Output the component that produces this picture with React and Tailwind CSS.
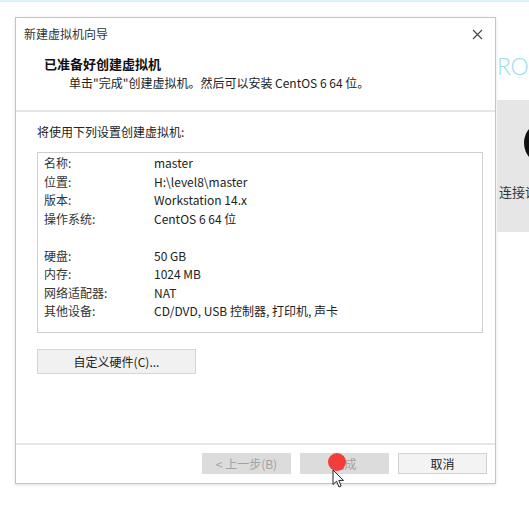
import React from 'react';

const rows = [
  ['名称:', 'master'],
  ['位置:', 'H:\\level8\\master'],
  ['版本:', 'Workstation 14.x'],
  ['操作系统:', 'CentOS 6 64 位'],
  null,
  ['硬盘:', '50 GB'],
  ['内存:', '1024 MB'],
  ['网络适配器:', 'NAT'],
  ['其他设备:', 'CD/DVD, USB 控制器, 打印机, 声卡'],
];

function CloseIcon() {
  return (
    <svg width="11" height="11" viewBox="0 0 11 11">
      <path d="M1 1 L10 10 M10 1 L1 10" stroke="#444" strokeWidth="1.1" fill="none" />
    </svg>
  );
}

function Cursor() {
  return (
    <svg width="13" height="20" viewBox="0 0 13 20">
      <path
        d="M1 1 L1 15.5 L4.5 12.2 L7 18 L9.2 17 L6.8 11.4 L11.5 11.4 Z"
        fill="#fff"
        stroke="#222"
        strokeWidth="1"
        strokeLinejoin="round"
      />
    </svg>
  );
}

export default function App() {
  return (
    <div
      className="relative w-[529px] h-[512px] overflow-hidden bg-white text-[12px] text-[#1e1e1e]"
      style={{ fontFamily: '"Noto Sans CJK SC", "Noto Sans", sans-serif' }}
    >
      <div className="h-[2px] bg-[#dcf2f7]" />
      <div className="flex">
        <div className="ml-[15px] mt-[15px] w-[481px] border border-[#c4c4c4] bg-white shadow-[0_1px_3px_rgba(0,0,0,0.12)]">
          {/* title bar */}
          <div className="flex h-[32px] items-center justify-between pl-[8px] pr-[12px]">
            <span className="text-[12px] text-[#333]">新建虚拟机向导</span>
            <CloseIcon />
          </div>

          {/* header */}
          <div className="h-[60px] pt-[6px]">
            <div className="pl-[28px] text-[13px] font-bold leading-[16px] text-[#111]">已准备好创建虚拟机</div>
            <div className="mt-[2px] pl-[53px] text-[12px] leading-[18px] text-[#222]">
              单击"完成"创建虚拟机。然后可以安装 CentOS 6 64 位。
            </div>
          </div>
          <div className="h-[2px] bg-[#e6e6e6]" />

          {/* body */}
          <div className="h-[331px] pl-[21px] pr-[12px] pt-[11px]">
            <div className="leading-[18px] text-[#222]">将使用下列设置创建虚拟机:</div>
            <div className="mt-[11px] h-[181px] border border-[#cfcfcf] bg-white pl-[6px] pt-[1px]">
              {rows.map((r, i) =>
                r ? (
                  <div key={i} className="flex leading-[18.5px]">
                    <span className="w-[110px] shrink-0 text-[#333]">{r[0]}</span>
                    <span className="text-[#222]">{r[1]}</span>
                  </div>
                ) : (
                  <div key={i} className="h-[18.5px]" />
                )
              )}
            </div>
            <button
              type="button"
              className="mt-[16px] flex h-[25px] w-[159px] items-center justify-center border border-[#d6d6d6] bg-[#f1f1f1] text-[12px] text-[#222]"
            >
              自定义硬件(C)...
            </button>
          </div>
          <div className="h-[2px] bg-[#e6e6e6]" />

          {/* footer */}
          <div className="flex justify-end gap-[9px] pb-[9px] pr-[8px] pt-[8px]">
            <button type="button" className="flex h-[21px] w-[89px] items-center justify-center bg-[#dcdcdc] text-[12px] text-[#a3a3a3]">
              &lt; 上一步(B)
            </button>
            <button type="button" className="flex h-[21px] w-[89px] items-center justify-center bg-[#dcdcdc] text-[12px] text-[#a3a3a3]">
              完成
            </button>
            <button type="button" className="flex h-[21px] w-[89px] items-center justify-center border border-[#d2d2d2] bg-[#f3f3f3] text-[12px] text-[#222]">
              取消
            </button>
          </div>
        </div>

        {/* background app to the right */}
        <div className="ml-[1px] flex w-[32px] flex-col">
          <div
            className="mt-[50px] h-[48px] whitespace-nowrap text-[23px] font-light leading-[28px] tracking-[-0.5px] text-[#9cdcec]"
            style={{ fontFamily: 'Lato, "Noto Sans", sans-serif' }}
          >
            RO
          </div>
          <div className="relative h-[132px] overflow-hidden bg-[#e6e6e6]">
            <div className="absolute left-[27px] top-[21px] h-[44px] w-[44px] rounded-full bg-[#111]" />
            <div className="absolute left-[2px] top-[82px] whitespace-nowrap text-[13px] text-[#333]">连接设</div>
          </div>
        </div>
      </div>

      {/* red click marker and cursor */}
      <div className="absolute left-[328px] top-[453px] h-[18px] w-[18px] rounded-full bg-[#f23d3d]" />
      <div className="absolute left-[332px] top-[469px]">
        <Cursor />
      </div>
    </div>
  );
}
